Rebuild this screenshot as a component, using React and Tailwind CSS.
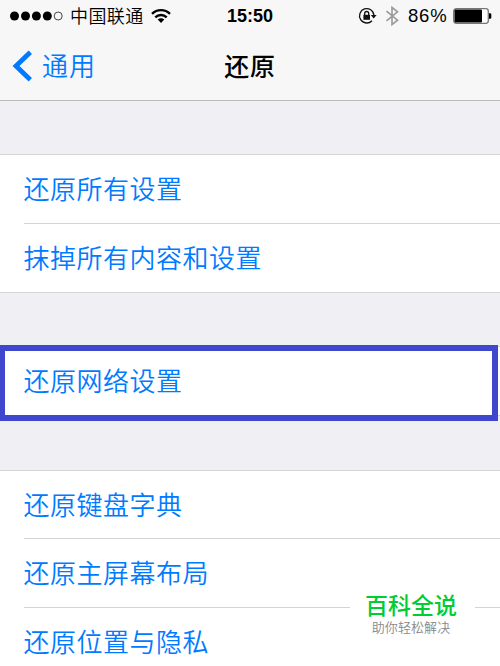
import React from "react";

function StatusBar() {
  return (
    <div className="relative h-8 text-black">
      <div className="flex h-8 items-center pl-[10px]">
        <svg width="54" height="10" viewBox="0 0 54 10">
          <circle cx="4.5" cy="5" r="4.5" />
          <circle cx="15.5" cy="5" r="4.5" />
          <circle cx="26.4" cy="5" r="4.5" />
          <circle cx="37.3" cy="5" r="4.5" />
          <circle cx="48.2" cy="5" r="4" fill="none" stroke="#333" strokeWidth="0.9" />
        </svg>
        <span className="ml-[6px] pt-px text-[18px] font-[350] leading-8 tracking-[0.4px]">中国联通</span>
        <svg className="ml-[7px]" width="20" height="16" viewBox="0 0 20 16" fill="none" stroke="#000" strokeWidth="2.4">
          <path d="M1 5.8a12.8 12.8 0 0 1 18 0" />
          <path d="M4.3 9.3a8.1 8.1 0 0 1 11.4 0" />
          <path d="M10 15l-3.3-3.4a4.7 4.7 0 0 1 6.6 0z" fill="#000" stroke="none" />
        </svg>
        <div className="ml-auto flex h-8 items-center pr-[8px]">
          <svg width="20" height="18" viewBox="0 0 20 18" fill="none" stroke="#111" strokeWidth="1.3">
            <path d="M14 13.7A7.2 7.2 0 1 1 15.9 8.3" />
            <path d="M12.8 8h5.8l-2.9 3.5z" fill="#111" stroke="none" />
            <rect x="5.4" y="7.8" width="6.6" height="5" fill="#111" stroke="none" />
            <path d="M6.7 8V6.5a2 2 0 0 1 4 0V8" />
          </svg>
          <svg className="ml-[7px]" width="14" height="20" viewBox="0 0 14 20" fill="none" stroke="#999" strokeWidth="1.6">
            <path d="M1.5 5.2l11 9L7 18.6V1.4l5.5 4.4-11 9" />
          </svg>
          <span className="ml-[9px] w-[40px] text-[18.5px] leading-8 tracking-[0.8px]">86%</span>
          <svg className="ml-[5px]" width="39" height="16" viewBox="0 0 39 16">
            <rect x="0.7" y="0.7" width="34.6" height="14.6" rx="2.5" fill="#fff" stroke="#777" strokeWidth="1.3" />
            <rect x="1.5" y="1.5" width="27.5" height="13" rx="1" />
            <path d="M36 5.3h1a1.3 1.3 0 0 1 1.3 1.3v2.8a1.3 1.3 0 0 1-1.3 1.3h-1z" />
          </svg>
        </div>
      </div>
      <span className="absolute inset-x-0 top-0 text-center text-[18px] font-bold leading-8">15:50</span>
    </div>
  );
}

function NavBar() {
  return (
    <div className="relative flex h-[68px] items-center pl-[12px]">
      <svg width="20" height="32" viewBox="0 0 20 32" fill="none" stroke="#007aff" strokeWidth="4.8">
        <path d="M18.3 2.2L4 16l14.3 13.8" />
      </svg>
      <span className="ml-[10px] pt-px text-[26px] font-[350] leading-[68px] tracking-[1px] text-[#007aff]">通用</span>
      <h1 className="absolute inset-x-0 top-0 pt-px text-center text-[25px] font-medium leading-[68px] tracking-[0.7px] text-black">还原</h1>
    </div>
  );
}

function Row({ label, last }) {
  return (
    <div className="pl-[24px]">
      <div className={last ? "h-[68px]" : "h-[68.5px] border-b border-[#d4d4d7]"}>
        <span className="-ml-[0.5px] block pt-px text-[26px] font-[350] leading-[68px] tracking-[0.5px] whitespace-nowrap text-[#007aff]">{label}</span>
      </div>
    </div>
  );
}

function Group({ items }) {
  return (
    <div className="border-y border-[#d4d4d7] bg-white">
      {items.map((label, i) => (
        <Row key={label} label={label} last={i === items.length - 1} />
      ))}
    </div>
  );
}

export default function App() {
  return (
    <div className="relative h-[666px] w-[500px] overflow-hidden bg-[#efeff4] font-['Liberation_Sans','Noto_Sans_CJK_SC',sans-serif]">
      <header className="h-[101px] border-b border-[#b9b9bc] bg-[#f7f7f7]">
        <StatusBar />
        <NavBar />
      </header>

      <main className="flex flex-col pt-[53px]">
        <Group items={["还原所有设置", "抹掉所有内容和设置"]} />
        <div className="relative mt-[53.5px]">
          <Group items={["还原网络设置"]} />
          <div className="absolute -top-[1px] -left-[1px] h-[76px] w-[499px] border-[6px] border-[#3f48cc]" />
        </div>
        <div className="mt-[53.5px]">
          <Group items={["还原键盘字典", "还原主屏幕布局", "还原位置与隐私"]} />
        </div>
      </main>

      <div className="absolute top-[590px] left-[350px] flex h-[50px] w-[125px] flex-col items-center bg-white pr-[3px]">
        <span className="text-[23px] font-medium leading-[32px] text-[#00cc33]">百科全说</span>
        <span className="text-[13px] font-[350] leading-[12px] tracking-[0.1px] text-[#888]">助你轻松解决</span>
      </div>
    </div>
  );
}
